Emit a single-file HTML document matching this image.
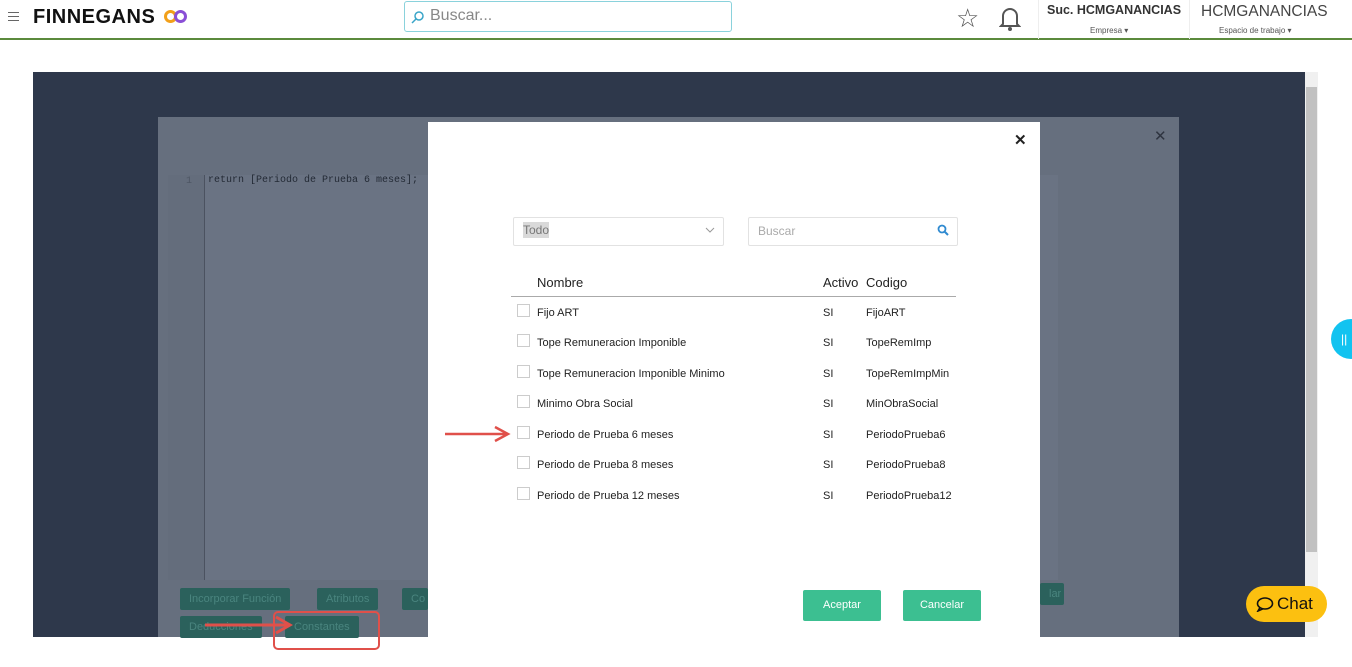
<!DOCTYPE html>
<html><head><meta charset="utf-8"><style>
*{box-sizing:border-box;margin:0;padding:0}
body{width:1352px;height:667px;background:#fff;font-family:"Liberation Sans",sans-serif;position:relative;overflow:hidden}
.a{position:absolute}
.hdr{left:0;top:0;width:1352px;height:40px;background:#fff;border-bottom:2px solid #5b8a3c}
.t{font-size:11px;color:#222}
.btn{position:absolute;height:22px;background:#2b615c;color:#4a857f;font-size:11px;border-radius:2px;padding:5px 9px}
</style></head><body>
<div class="a hdr"></div>
<div class="a" style="left:8px;top:12px;width:11px;height:9px;border-top:1px solid #666;border-bottom:1px solid #666"><div style="margin-top:3px;height:1px;background:#666"></div></div>
<div class="a" style="left:33px;top:6px;font-size:20px;font-weight:bold;color:#111;letter-spacing:0.5px">FINNEGANS</div>
<div class="a" style="left:164px;top:10px;width:13px;height:13px;border:3px solid #f2a01a;border-radius:50%"></div>
<div class="a" style="left:174px;top:10px;width:13px;height:13px;border:3px solid #8a4fd6;border-radius:50%"></div>
<div class="a" style="left:404px;top:1px;width:328px;height:31px;border:1px solid #8ad2dc;border-radius:3px"></div>
<svg class="a" style="left:411px;top:10px" width="14" height="14"><circle cx="8" cy="6" r="4" stroke="#39a5c8" stroke-width="1.5" fill="none"/><path d="M5 9 L1 13" stroke="#39a5c8" stroke-width="1.5"/></svg>
<div class="a" style="left:430px;top:7px;font-size:16px;color:#888">Buscar...</div>
<div class="a" style="left:956px;top:3px;font-size:26px;color:#555">☆</div>
<svg class="a" style="left:999px;top:5px" width="22" height="26" viewBox="0 0 22 26"><path d="M4 19 V11 a7 7 0 0 1 14 0 V19 L20 21 H2 Z" fill="none" stroke="#555" stroke-width="2"/><circle cx="11" cy="24" r="2" fill="#555"/></svg>
<div class="a" style="left:1038px;top:0;width:1px;height:39px;background:#eee"></div>
<div class="a" style="left:1189px;top:0;width:1px;height:39px;background:#eee"></div>
<div class="a" style="left:1047px;top:3px;font-size:12.5px;font-weight:bold;color:#333">Suc. HCMGANANCIAS</div>
<div class="a" style="left:1090px;top:26px;font-size:8px;color:#555">Empresa ▾</div>
<div class="a" style="left:1201px;top:3px;font-size:15.5px;color:#444">HCMGANANCIAS</div>
<div class="a" style="left:1219px;top:26px;font-size:8px;color:#555">Espacio de trabajo ▾</div>

<div class="a" style="left:33px;top:72px;width:1272px;height:565px;background:#2e384b"></div>
<div class="a" style="left:1305px;top:72px;width:13px;height:565px;background:#f0f0f0"></div>
<div class="a" style="left:1306px;top:87px;width:11px;height:465px;background:#c1c1c1"></div>
<div class="a" style="left:158px;top:117px;width:1021px;height:520px;background:#666f7e"></div>
<div class="a" style="left:168px;top:175px;width:890px;height:405px;background:#6a7383;border-left:36px solid #646d7c"></div>
<div class="a" style="left:204px;top:175px;width:1px;height:405px;background:#4b5260"></div>
<div class="a" style="left:186px;top:176px;font-size:10px;color:#4e5664;font-family:'Liberation Mono',monospace">1</div>
<div class="a" style="left:208px;top:175px;font-size:10px;color:#232a35;font-family:'Liberation Mono',monospace">return [Periodo de Prueba 6 meses];</div>
<div class="a" style="left:1154px;top:127px;font-size:15px;color:#2e3440">✕</div>
<div class="btn" style="left:180px;top:588px">Incorporar Función</div>
<div class="btn" style="left:317px;top:588px">Atributos</div>
<div class="btn" style="left:402px;top:588px;width:26px">Co</div>
<div class="btn" style="left:180px;top:616px">Deducciones</div>
<div class="btn" style="left:285px;top:616px">Constantes</div>
<div class="btn" style="left:1040px;top:583px;width:24px">lar</div>
<div class="a" style="left:273px;top:611px;width:107px;height:39px;border:2px solid #e0504a;border-radius:5px"></div>
<svg class="a" style="left:200px;top:614px" width="100" height="24"><path d="M5 11 H88 M76 3 L90 11 L76 19" stroke="#e0504a" stroke-width="3" fill="none"/></svg>

<div class="a" style="left:428px;top:122px;width:612px;height:515px;background:#fff"></div>
<div class="a" style="left:1014px;top:131px;font-size:15px;font-weight:bold;color:#222">✕</div>
<div class="a" style="left:513px;top:217px;width:211px;height:29px;border:1px solid #e2e2e2;border-radius:2px"></div>
<div class="a" style="left:523px;top:222px;font-size:12px;color:#777;background:#d9d9d9;padding:1px 0">Todo</div>
<svg class="a" style="left:705px;top:227px" width="10" height="6"><path d="M1 1 L5 5 L9 1" stroke="#999" fill="none"/></svg>
<div class="a" style="left:748px;top:217px;width:210px;height:29px;border:1px solid #e2e2e2;border-radius:2px"></div>
<div class="a" style="left:758px;top:224px;font-size:12px;color:#aaa">Buscar</div>
<svg class="a" style="left:937px;top:224px" width="12" height="12"><circle cx="5" cy="5" r="3.5" stroke="#2f8ad0" stroke-width="1.8" fill="none"/><path d="M7.5 7.5 L11 11" stroke="#2f8ad0" stroke-width="2"/></svg>
<div class="a" style="left:537px;top:275px;font-size:13px;color:#222">Nombre</div>
<div class="a" style="left:823px;top:275px;font-size:13px;color:#222">Activo</div>
<div class="a" style="left:866px;top:275px;font-size:13px;color:#222">Codigo</div>
<div class="a" style="left:511px;top:296px;width:445px;height:1px;background:#aaa"></div>

<div class="a" style="left:0;top:304px">
<div class="a" style="left:517px;top:0"><div class="a" style="width:13px;height:13px;border:1px solid #ccc"></div><div class="a t" style="left:20px;top:3px;white-space:nowrap">Fijo ART</div><div class="a t" style="left:306px;top:3px">SI</div><div class="a t" style="left:349px;top:3px">FijoART</div></div>
<div class="a" style="left:517px;top:30px"><div class="a" style="width:13px;height:13px;border:1px solid #ccc"></div><div class="a t" style="left:20px;top:3px;white-space:nowrap">Tope Remuneracion Imponible</div><div class="a t" style="left:306px;top:3px">SI</div><div class="a t" style="left:349px;top:3px">TopeRemImp</div></div>
<div class="a" style="left:517px;top:61px"><div class="a" style="width:13px;height:13px;border:1px solid #ccc"></div><div class="a t" style="left:20px;top:3px;white-space:nowrap">Tope Remuneracion Imponible Minimo</div><div class="a t" style="left:306px;top:3px">SI</div><div class="a t" style="left:349px;top:3px">TopeRemImpMin</div></div>
<div class="a" style="left:517px;top:91px"><div class="a" style="width:13px;height:13px;border:1px solid #ccc"></div><div class="a t" style="left:20px;top:3px;white-space:nowrap">Minimo Obra Social</div><div class="a t" style="left:306px;top:3px">SI</div><div class="a t" style="left:349px;top:3px">MinObraSocial</div></div>
<div class="a" style="left:517px;top:122px"><div class="a" style="width:13px;height:13px;border:1px solid #ccc"></div><div class="a t" style="left:20px;top:3px;white-space:nowrap">Periodo de Prueba 6 meses</div><div class="a t" style="left:306px;top:3px">SI</div><div class="a t" style="left:349px;top:3px">PeriodoPrueba6</div></div>
<div class="a" style="left:517px;top:152px"><div class="a" style="width:13px;height:13px;border:1px solid #ccc"></div><div class="a t" style="left:20px;top:3px;white-space:nowrap">Periodo de Prueba 8 meses</div><div class="a t" style="left:306px;top:3px">SI</div><div class="a t" style="left:349px;top:3px">PeriodoPrueba8</div></div>
<div class="a" style="left:517px;top:183px"><div class="a" style="width:13px;height:13px;border:1px solid #ccc"></div><div class="a t" style="left:20px;top:3px;white-space:nowrap">Periodo de Prueba 12 meses</div><div class="a t" style="left:306px;top:3px">SI</div><div class="a t" style="left:349px;top:3px">PeriodoPrueba12</div></div>
</div>
<svg class="a" style="left:442px;top:423px" width="70" height="22"><path d="M3 11 H64 M53 4 L66 11 L53 18" stroke="#e0504a" stroke-width="2.5" fill="none"/></svg>
<div class="a" style="left:803px;top:590px;width:78px;height:31px;background:#3cbf91;border-radius:2px;color:#fff;font-size:11px;text-align:center;line-height:31px">Aceptar</div>
<div class="a" style="left:903px;top:590px;width:78px;height:31px;background:#3cbf91;border-radius:2px;color:#fff;font-size:11px;text-align:center;line-height:31px">Cancelar</div>
<div class="a" style="left:1331px;top:319px;width:40px;height:40px;border-radius:50%;background:#12c3f0;color:#fff;font-size:12px;line-height:40px;padding-left:10px">||</div>
<div class="a" style="left:1246px;top:586px;width:81px;height:36px;border-radius:18px;background:#fcc010"></div>
<svg class="a" style="left:1256px;top:597px" width="18" height="15"><ellipse cx="9" cy="6.5" rx="7.5" ry="5.5" fill="none" stroke="#111" stroke-width="1.6"/><path d="M4 10.5 L2 14 L7 11.8" fill="none" stroke="#111" stroke-width="1.6"/></svg>
<div class="a" style="left:1277px;top:594px;font-size:17px;color:#111">Chat</div>
</body></html>
